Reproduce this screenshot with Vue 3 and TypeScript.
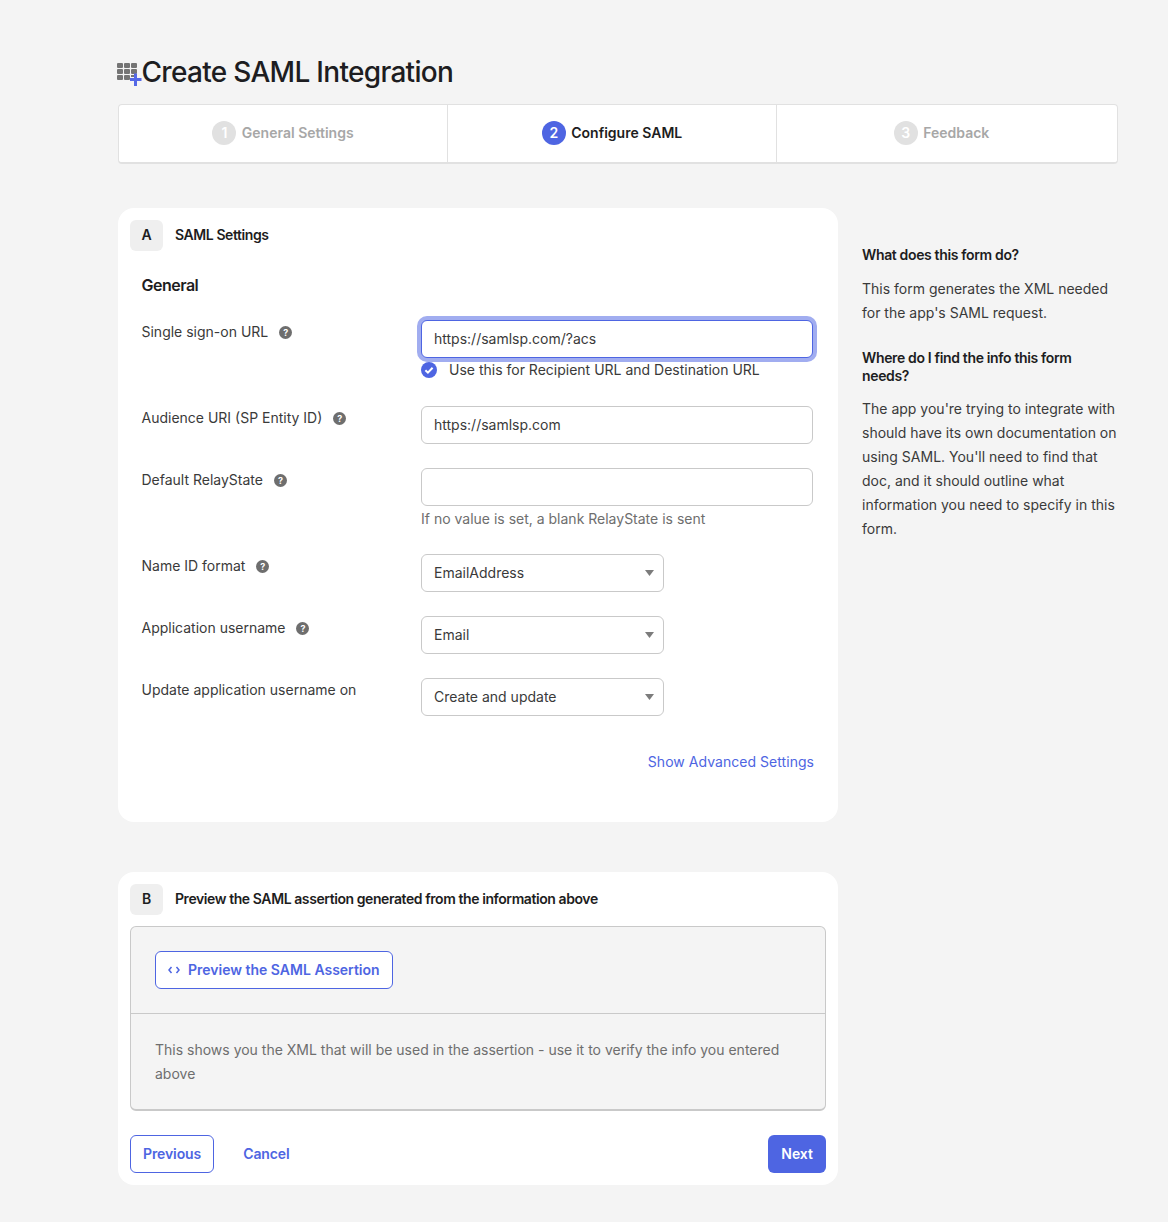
<script setup lang="ts">
interface Step {
  num: number;
  label: string;
  active: boolean;
}

const steps: Step[] = [
  { num: 1, label: 'General Settings', active: false },
  { num: 2, label: 'Configure SAML', active: true },
  { num: 3, label: 'Feedback', active: false },
];

const selects = [
  { label: 'Name ID format', help: true, value: 'EmailAddress' },
  { label: 'Application username', help: true, value: 'Email' },
  { label: 'Update application username on', help: false, value: 'Create and update' },
];
</script>

<template>
  <div class="page">
    <h1 class="title">
      <svg class="title-icon" width="24.5" height="28" viewBox="0 0 24.5 28">
        <g fill="#747474">
          <rect x="0" y="5" width="6" height="5" rx="1" />
          <rect x="7" y="5" width="6" height="5" rx="1" />
          <rect x="14" y="5" width="6" height="5" rx="1" />
          <rect x="0" y="11" width="6" height="5" rx="1" />
          <rect x="7" y="11" width="6" height="5" rx="1" />
          <rect x="14" y="11" width="6" height="5" rx="1" />
          <rect x="0" y="17" width="6" height="5" rx="1" />
          <rect x="7" y="17" width="6" height="5" rx="1" />
          <rect x="14" y="17" width="3" height="2" />
        </g>
        <path d="M18.5 15.5v12.5M13 21.5h11.5" stroke="#5468e6" stroke-width="3" fill="none" />
      </svg>
      Create SAML Integration
    </h1>

    <div class="steps">
      <div v-for="step in steps" :key="step.num" class="step" :class="{ active: step.active }">
        <span class="step-num">{{ step.num }}</span>
        <span class="step-label">{{ step.label }}</span>
      </div>
    </div>

    <div class="columns">
      <div class="main">
        <section class="card card-a">
          <div class="card-head">
            <span class="letter">A</span>
            <span class="card-title">SAML Settings</span>
          </div>
          <h2 class="section-title">General</h2>

          <div class="row row-first">
            <label class="row-label">Single sign-on URL <span class="help">?</span></label>
            <div class="row-field">
              <input class="input focused" value="https://samlsp.com/?acs" />
              <div class="check-row">
                <svg width="16" height="16" viewBox="0 0 16 16">
                  <circle cx="8" cy="8" r="8" fill="#4e65e2" />
                  <path d="M4.4 8.3l2.5 2.4 4.7-5" stroke="#fff" stroke-width="2" fill="none" />
                </svg>
                <span>Use this for Recipient URL and Destination URL</span>
              </div>
            </div>
          </div>

          <div class="row">
            <label class="row-label">Audience URI (SP Entity ID) <span class="help">?</span></label>
            <div class="row-field">
              <input class="input" value="https://samlsp.com" />
            </div>
          </div>

          <div class="row">
            <label class="row-label">Default RelayState <span class="help">?</span></label>
            <div class="row-field">
              <input class="input" value="" />
              <p class="hint">If no value is set, a blank RelayState is sent</p>
            </div>
          </div>

          <div v-for="sel in selects" :key="sel.label" class="row">
            <label class="row-label">{{ sel.label }} <span v-if="sel.help" class="help">?</span></label>
            <div class="row-field">
              <div class="select">
                <span>{{ sel.value }}</span>
                <i class="caret"></i>
              </div>
            </div>
          </div>

          <div class="advanced">
            <a class="link">Show Advanced Settings</a>
          </div>
        </section>

        <section class="card card-b">
          <div class="card-head">
            <span class="letter">B</span>
            <span class="card-title">Preview the SAML assertion generated from the information above</span>
          </div>
          <div class="preview">
            <div class="preview-top">
              <button class="btn btn-outline preview-btn">
                <svg width="12" height="8" viewBox="0 0 12 8">
                  <path d="M3.5 1L1 4l2.5 3M8.5 1L11 4 8.5 7" stroke="#4e65e2" stroke-width="1.5" fill="none" />
                </svg>
                Preview the SAML Assertion
              </button>
            </div>
            <p class="preview-text">
              This shows you the XML that will be used in the assertion - use it to verify the info you entered above
            </p>
          </div>
          <div class="actions">
            <button class="btn btn-outline">Previous</button>
            <button class="btn btn-plain">Cancel</button>
            <button class="btn btn-primary">Next</button>
          </div>
        </section>
      </div>

      <aside class="side">
        <h3>What does this form do?</h3>
        <p>This form generates the XML needed for the app's SAML request.</p>
        <h3>Where do I find the info this form needs?</h3>
        <p>
          The app you're trying to integrate with should have its own documentation on using SAML. You'll need to find
          that doc, and it should outline what information you need to specify in this form.
        </p>
      </aside>
    </div>
  </div>
</template>

<style>
html,
body {
  margin: 0;
  background: #f4f4f4;
}
</style>

<style scoped>
.page {
  box-sizing: border-box;
  width: 1168px;
  height: 1222px;
  padding: 49px 50px 0 118px;
  font-family: Inter, "Noto Sans", sans-serif;
  font-size: 14px;
  line-height: 24px;
  color: #3a3a3a;
  background: #f4f4f4;
}

.title {
  display: flex;
  align-items: center;
  height: 46px;
  margin: 0 0 9px;
  font-size: 28px;
  font-weight: 500;
  color: #1d1d21;
  letter-spacing: -0.7px;
}

.title-icon {
  flex: none;
  margin-left: -1px;
}

.steps {
  display: flex;
  height: 60px;
  box-sizing: border-box;
  padding-bottom: 1px;
  background: #fff;
  border: 1px solid #e1e1e1;
  border-bottom-width: 2px;
  border-radius: 4px;
}

.step {
  flex: none;
  box-sizing: border-box;
  width: 329px;
  margin-bottom: -1px;
  display: flex;
  align-items: center;
  justify-content: center;
  gap: 5.5px;
  font-weight: 600;
  color: #a7a7a7;
  border-right: 1px solid #e1e1e1;
}

.step:last-child {
  border-right: 0;
}

.step-num {
  width: 24px;
  height: 24px;
  margin-bottom: 1px;
  border-radius: 50%;
  background: #e1e1e1;
  color: #fff;
  text-align: center;
  font-size: 14px;
}

.step-label {
  margin-bottom: 1px;
}

.step.active {
  color: #1d1d21;
}

.step.active .step-num {
  background: #4e65e2;
}

.columns {
  display: flex;
  gap: 24px;
  margin-top: 44px;
}

.main {
  flex: none;
  width: 720px;
}

.card {
  box-sizing: border-box;
  background: #fff;
  border-radius: 16px;
  padding: 12px;
}

.card-a {
  height: 614px;
  margin-bottom: 50px;
}

.card-b {
  height: 313px;
}

.card-head {
  display: flex;
  align-items: center;
  height: 30px;
  gap: 12px;
}

.card-a .card-head {
  height: 31px;
}

.card-a .card-title {
  margin-top: -1px;
}

.letter {
  width: 33px;
  height: 31px;
  flex: none;
  border-radius: 6px;
  background: #efefef;
  color: #1d1d21;
  font-weight: 600;
  line-height: 30px;
  text-align: center;
}

.card-title {
  font-weight: 600;
  color: #1d1d21;
  letter-spacing: -0.42px;
}

.section-title {
  margin: 22px 0 0 11.5px;
  font-size: 16px;
  line-height: 24px;
  font-weight: 600;
  color: #1d1d21;
  letter-spacing: -0.5px;
}

.row {
  display: flex;
  margin-top: 24px;
  padding-left: 11.5px;
}

.row-first {
  margin-top: 23px;
}

.row-label {
  flex: none;
  width: 279.5px;
  line-height: 24px;
}

.row-field {
  width: 392px;
}

.help {
  display: inline-block;
  width: 13px;
  height: 13px;
  margin-left: 7px;
  border-radius: 50%;
  background: #6e6e6e;
  color: #fff;
  font-size: 9px;
  font-weight: 700;
  line-height: 13px;
  text-align: center;
  vertical-align: 1px;
}

.input {
  display: block;
  box-sizing: border-box;
  width: 100%;
  height: 38px;
  padding: 0 12px 1px;
  border: 1px solid #c9c9c9;
  border-radius: 6px;
  background: #fff;
  color: #3a3a3a;
  font: inherit;
  outline: none;
}

.input.focused {
  border-color: #4e65e2;
  box-shadow: 0 0 0 4px #a1adf0;
}

.check-row {
  display: flex;
  align-items: center;
  gap: 12px;
  height: 24px;
}

.hint {
  margin: 1px 0 -1px;
  color: #6e6e6e;
}

.select {
  box-sizing: border-box;
  display: flex;
  align-items: center;
  justify-content: space-between;
  width: 243px;
  height: 38px;
  padding: 0 9px 0 12px;
  border: 1px solid #c9c9c9;
  border-radius: 6px;
  background: #fff;
}

.caret {
  width: 9px;
  height: 6px;
  background: #7c7c7c;
  clip-path: polygon(0 0, 100% 0, 50% 100%);
}

.advanced {
  margin-top: 34px;
  padding-right: 12px;
  text-align: right;
}

.link {
  color: #4e65e2;
  letter-spacing: 0.04px;
}

.preview {
  margin-top: 12px;
  height: 185px;
  box-sizing: border-box;
  background: #f4f4f4;
  border: 1px solid #c9c9c9;
  border-bottom-width: 2px;
  border-radius: 6px;
}

.preview-top {
  height: 87px;
  box-sizing: border-box;
  padding: 24px;
  border-bottom: 1px solid #c9c9c9;
}

.preview-text {
  margin: 0;
  padding: 24px;
  color: #6e6e6e;
}

.btn {
  box-sizing: border-box;
  height: 38px;
  padding: 0 12px;
  border-radius: 6px;
  border: 1px solid transparent;
  font: inherit;
  font-weight: 600;
}

.btn-outline {
  background: #fff;
  border-color: #4e65e2;
  color: #4e65e2;
}

.preview-btn {
  display: flex;
  align-items: center;
  gap: 8px;
}

.btn-plain {
  background: none;
  color: #4e65e2;
  margin-left: 16px;
}

.btn-primary {
  margin-left: auto;
  background: #4e65e2;
  color: #fff;
}

.actions {
  display: flex;
  margin-top: 24px;
}

.actions .btn-outline,
.actions .btn-plain {
  letter-spacing: -0.1px;
}

.side {
  flex: 1;
  padding-top: 38px;
}

.side h3 {
  margin: 0;
  font-size: 14px;
  line-height: 18px;
  font-weight: 600;
  color: #1d1d21;
  letter-spacing: -0.35px;
}

.side p {
  margin: 13px 0 24px;
}

.side p:last-child {
  margin-top: 12px;
}
</style>
